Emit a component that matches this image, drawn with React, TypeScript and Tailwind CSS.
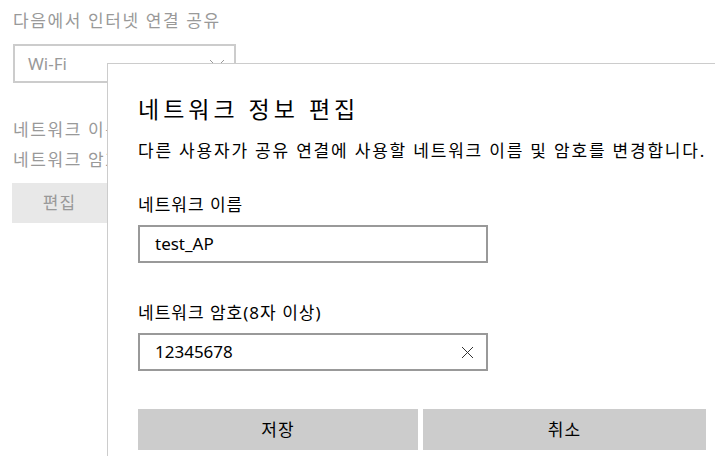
export default function App() {
  return (
    <div className="relative w-[715px] h-[456px] overflow-hidden bg-white font-['Noto_Sans','Noto_Sans_CJK_KR',sans-serif]">
      {/* page behind the dialog */}
      <div className="flex flex-col pl-[13px] pt-[9px] text-[#999]">
        <p className="text-[17px] leading-[24px] tracking-[1.6px]">다음에서 인터넷 연결 공유</p>
        <div className="mt-[11px] w-[223px] h-[39px] border-2 border-[#ccc] flex items-center justify-between pl-[13px] pr-[9px]">
          <span className="text-[17px]">Wi-Fi</span>
          <svg width="16" height="10" viewBox="0 0 16 10">
            <path d="M1 1l7 7 7-7" fill="none" stroke="#999" strokeWidth="1" />
          </svg>
        </div>
        <p className="mt-[37px] w-[94px] overflow-hidden whitespace-nowrap text-[17px] leading-[20px] tracking-[1.6px]">네트워크 이름: test_AP</p>
        <p className="mt-[10px] w-[94px] overflow-hidden whitespace-nowrap text-[17px] leading-[20px] tracking-[1.6px]">네트워크 암호: 12345678</p>
        <button className="mt-[13px] -ml-px w-[95px] h-[40px] bg-[#e8e8e8] text-[17px] text-[#999] tracking-[1px]">
          편집
        </button>
      </div>

      {/* dialog */}
      <div className="absolute left-[107px] top-[63px] w-[620px] h-[420px] bg-white border border-[#ccc] pl-[30px] pt-[28px] text-black">
        <h1 className="text-[23px] leading-[34px] tracking-[4px]">네트워크 정보 편집</h1>
        <p className="mt-[13px] text-[17px] leading-[24px] tracking-[1.8px]">
          다른 사용자가 공유 연결에 사용할 네트워크 이름 및 암호를 변경합니다.
        </p>
        <label className="block mt-[30px] text-[17px] leading-[24px] tracking-[1px]">네트워크 이름</label>
        <div className="mt-[8px] w-[350px] h-[38px] border-2 border-[#999] flex items-center px-[15px] text-[17px]">
          test_AP
        </div>
        <label className="block mt-[38px] text-[17px] leading-[24px] tracking-[1px]">네트워크 암호(8자 이상)</label>
        <div className="mt-[8px] w-[350px] h-[38px] border-2 border-[#999] flex items-center justify-between pl-[15px] pr-[12px] text-[17px]">
          <span>12345678</span>
          <svg width="13" height="13" viewBox="0 0 13 13">
            <path d="M1 1l11 11M12 1L1 12" stroke="#333" strokeWidth="1" />
          </svg>
        </div>
        <div className="mt-[38px] flex gap-[5px] w-[568px]">
          <button className="flex-1 h-[41px] bg-[#ccc] text-[17px] tracking-[1px]">저장</button>
          <button className="w-[283px] h-[41px] bg-[#ccc] text-[17px] tracking-[1px]">취소</button>
        </div>
      </div>
    </div>
  )
}
